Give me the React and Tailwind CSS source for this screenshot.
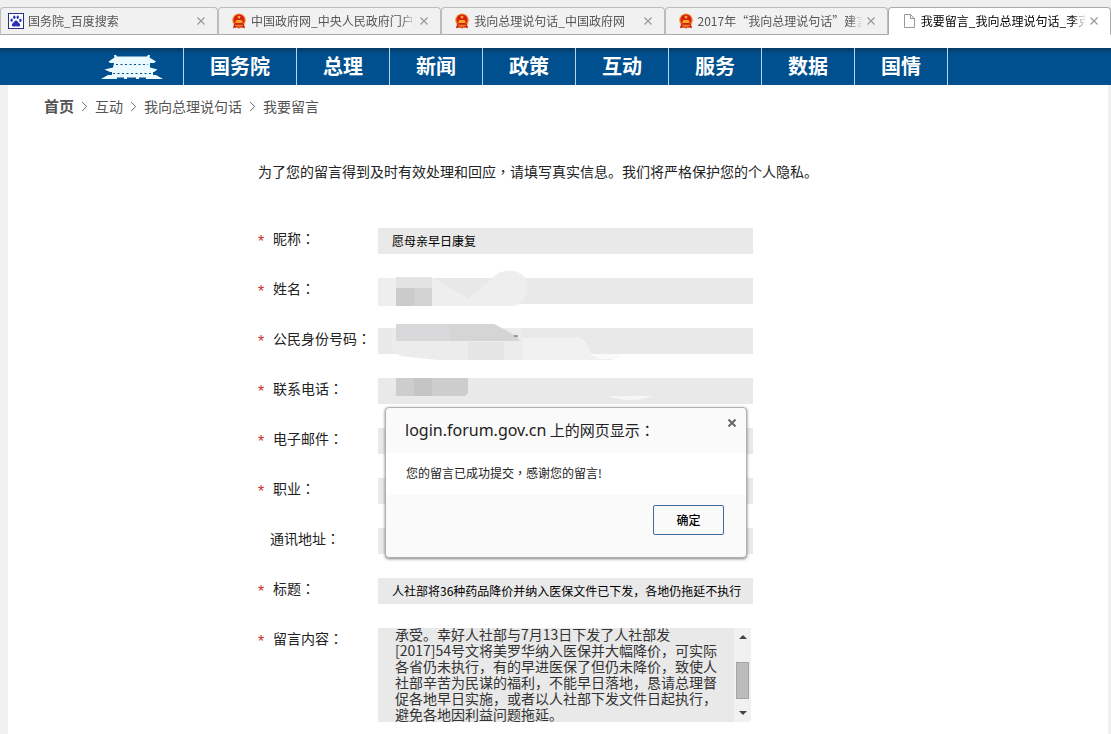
import { ChevronRight } from "lucide-react";

const tabs = [
  { icon: "paw", title: "国务院_百度搜索" },
  { icon: "emblem", title: "中国政府网_中央人民政府门户网" },
  { icon: "emblem", title: "我向总理说句话_中国政府网" },
  { icon: "emblem", title: "2017年“我向总理说句话”建言" },
  { icon: "page", title: "我要留言_我向总理说句话_李克强", active: true },
];

const navItems = ["国务院", "总理", "新闻", "政策", "互动", "服务", "数据", "国情"];

const fields = [
  { id: "nickname", label: "昵称", required: true, value: "愿母亲早日康复" },
  { id: "name", label: "姓名", required: true, value: "" },
  { id: "idcard", label: "公民身份号码", required: true, value: "" },
  { id: "phone", label: "联系电话", required: true, value: "" },
  { id: "email", label: "电子邮件", required: true, value: "" },
  { id: "job", label: "职业", required: true, value: "" },
  { id: "address", label: "通讯地址", required: false, value: "" },
  { id: "title", label: "标题", required: true, value: "人社部将36种药品降价并纳入医保文件已下发，各地仍拖延不执行" },
];

const message = [
  "承受。幸好人社部与7月13日下发了人社部发",
  "[2017]54号文将美罗华纳入医保并大幅降价，可实际",
  "各省仍未执行，有的早进医保了但仍未降价，致使人",
  "社部辛苦为民谋的福利，不能早日落地，恳请总理督",
  "促各地早日实施，或者以人社部下发文件日起执行，",
  "避免各地因利益问题拖延。",
].join("\n");

// full-width marks that sit in the middle of their box
function Mark({ children }) {
  return (
    <span lang="zh-TW" className="font-['Noto_Sans_CJK_TC',sans-serif]">
      {children}
    </span>
  );
}

function TabIcon({ name }) {
  if (name === "paw") {
    return (
      <svg viewBox="0 0 16 16" className="h-4 w-4 shrink-0">
        <rect x="0.5" y="0.5" width="15" height="15" fill="#fff" stroke="#2b3190" />
        <g fill="#2932b8">
          <ellipse cx="3.6" cy="7.2" rx="1.2" ry="1.6" transform="rotate(-12 3.6 7.2)" />
          <ellipse cx="6.3" cy="4.2" rx="1.2" ry="1.7" />
          <ellipse cx="9.7" cy="4.2" rx="1.2" ry="1.7" transform="rotate(8 9.7 4.2)" />
          <ellipse cx="12.4" cy="7.4" rx="1.2" ry="1.6" transform="rotate(14 12.4 7.4)" />
          <path d="M8 7.500c1.500 0 1.900 1.500 3 2.500 1.500 1.200 1.500 3.500-.5 3.600-1 .1-1.500-.3-2.500-.3s-1.500.4-2.500.3c-2-.1-2.100-2.300-.6-3.600C6.100 9 6.500 7.500 8 7.500z" />
        </g>
      </svg>
    );
  }
  if (name === "emblem") {
    return (
      <svg viewBox="0 0 16 16" className="h-4 w-4 shrink-0">
        <circle cx="8" cy="7.200" r="6.700" fill="#f0872a" />
        <path d="M3 11h10l1 4.200-3.500-.7L8 15.600l-2.500-1.100-3.500.7z" fill="#cf2413" />
        <circle cx="8" cy="7" r="5.500" fill="#d3200f" />
        <path d="M8 2.200l.6 1.300h1.300l-1 .9.4 1.300L8 5l-1.300.7.4-1.300-1-.9h1.300z" fill="#ffc534" />
        <path d="M4.500 8.500l1-1.600h5l1 1.600v1.400h-7z" fill="#f7a52b" />
        <path d="M4 12.300h8M5.500 14h5" stroke="#f5b63a" strokeWidth="0.800" />
      </svg>
    );
  }
  return (
    <svg viewBox="0 0 16 16" className="h-4 w-4 shrink-0">
      <path d="M3.500 1.500h6l4 4v9h-10zM9.500 1.500v4h4" fill="#fff" stroke="#999" />
    </svg>
  );
}

function Tab({ icon, title, active }) {
  return (
    <div
      className={
        active
          ? "flex min-w-0 flex-1 items-center rounded-t border border-b-white border-[#aaa] bg-white pr-2 pl-3 text-black"
          : "flex min-w-0 flex-1 items-center rounded-t border border-[#bcbcbc] border-b-[#aaa] bg-[#f1f1f1] pr-2 pl-3 text-[#555] first:w-[218px] first:flex-none first:pl-[7px]"
      }
    >
      <TabIcon name={icon} />
      <span className="ml-1 min-w-0 flex-1 overflow-hidden mask-[linear-gradient(to_right,#000_calc(100%-14px),transparent)] text-xs whitespace-nowrap">
        {title}
      </span>
      <button type="button" aria-label="关闭标签页" className="flex h-4 w-4 shrink-0 items-center justify-center text-[#999]">
        <svg viewBox="0 0 8 8" className="h-2 w-2" stroke="currentColor" strokeWidth="1.200">
          <path d="M0.500 0.500l7 7M7.500 0.500l-7 7" />
        </svg>
      </button>
    </div>
  );
}

function GateLogo() {
  return (
    <svg viewBox="0 0 62 26" className="h-[26px] w-[62px]" fill="#eafaff">
      <path d="M13 1h2l1 1.500h30L47 1h2l-.5 2.500L55 7.500l-2 1.500H9L7.500 7.500 13.500 3.500z" />
      <path d="M13 9h36v4.500l7.500 2L53 18H9l-5.500-2.500 8.500-2z" />
      <path d="M11 17h41v4h3l7 4H0l7-4h4z" />
      <path d="M15 10.500h32M12 19.500h38" stroke="#00508f" strokeWidth="1" strokeDasharray="2 2.500" fill="none" />
      <path d="M16 24.200h7M26 24.200h9M38 24.200h7" stroke="#00508f" strokeWidth="1.500" />
    </svg>
  );
}

function Smudges() {
  return (
    <svg
      viewBox="0 0 375 140"
      aria-hidden="true"
      className="pointer-events-none absolute top-[36px] left-[120px] h-[140px] w-[375px]"
    >
      {/* 姓名 */}
      <path d="M0 14h18v28H0z" fill="#ebebeb" />
      <path d="M36 14h24l30 20 22-17c6-9 16-12 24-10 14 3 17 17 10 27-2 5-6 8-12 8H0V14z" fill="#eee" />
      <path d="M55 14h58L90 34z" fill="#e8e8e8" />
      <path d="M18 13h36v11H18z" fill="#e3e3e3" />
      <path d="M18 24h18v18H18z" fill="#cbcbcb" />
      <path d="M36 24h18v18H36z" fill="#d2d2d2" />
      {/* 公民身份号码 */}
      <path d="M15 64h129v32H60L22 92 12 82z" fill="#ececec" />
      <path d="M90 78h36v18H90z" fill="#e5e5e5" />
      <path d="M144 74h50c10-3 18 6 18 15l25 7h-93z" fill="#f1f1f1" />
      <path d="M212 90h30v5h-20z" fill="#fafafa" />
      <path d="M18 60h98l22 12 4 5H18z" fill="#d8d7da" />
      <path d="M72 60h44l22 12 4 5H72z" fill="#d6d5d6" />
      <path d="M136 72h4" stroke="#555" />
      {/* 联系电话 */}
      <path d="M18 114h72v15l-3 3H18z" fill="#cdcdcd" />
      <path d="M36 114h18v18H36z" fill="#c5c5c5" />
      <path d="M230 132q22 8 45 0z" fill="#f6f6f6" />
    </svg>
  );
}

function AlertDialog() {
  return (
    <div
      role="alertdialog"
      aria-labelledby="alert-title"
      className="absolute top-[179px] left-[127px] w-[362px] rounded-sm border border-[#b0b0b0] bg-[#fafafa] text-black shadow-[0_1px_3px_rgba(0,0,0,0.5)]"
    >
      <div className="flex h-[45px] justify-between pr-[10px] pl-[19px]">
        <h2 id="alert-title" className="pt-[11px] text-[15px] leading-[22px] text-[#222]">
          <span className="font-['Noto_Sans',sans-serif] text-base leading-[22px]">login.forum.gov.cn</span> 上的网页显示<Mark>：</Mark>
        </h2>
        <button type="button" aria-label="关闭" className="mt-[11px] h-2 w-2">
          <svg viewBox="0 0 8 8" className="h-2 w-2" stroke="#666" strokeWidth="2">
            <path d="M0.500 0.500l7 7M7.500 0.500l-7 7" />
          </svg>
        </button>
      </div>
      <p className="h-[42px] bg-white pt-[11px] pl-5 text-xs leading-[18px] text-[#222]">
        您的留言已成功提交<Mark>，</Mark>感谢您的留言!
      </p>
      <div className="flex justify-end pt-[10px] pr-[22px] pb-[22px]">
        <button
          type="button"
          className="h-[30px] w-[71px] rounded-xs border border-[#3f6c9f] bg-[#fafafa] text-xs font-medium"
        >
          确定
        </button>
      </div>
    </div>
  );
}

function Label({ id, required, children }) {
  return (
    <label htmlFor={id} className="flex w-[120px] shrink-0 text-sm leading-5 text-[#222]">
      {required ? (
        <span className="w-[15px] pt-1 font-['Liberation_Sans',sans-serif] text-base leading-5 text-[#c8322d]">*</span>
      ) : (
        <span className="w-3" />
      )}
      <span>
        {children}
        <Mark>：</Mark>
      </span>
    </label>
  );
}

export default function App() {
  return (
    <div
      lang="zh-CN"
      className="flex min-h-screen flex-col bg-white font-['Noto_Sans_CJK_SC',sans-serif] text-[#222]"
    >
      <div className="flex h-[35px] bg-[#efefef] pt-[7px]">
        {tabs.map((tab) => (
          <Tab key={tab.title} {...tab} />
        ))}
      </div>

      <header className="mt-[13px] flex h-[37px] bg-[linear-gradient(#083a63,#00508f_6px,#00508f)]">
        <a href="#" aria-label="中国政府网" className="flex w-[184px] items-center justify-end border-r border-[#b9d3e6] pr-5">
          <GateLogo />
        </a>
        <nav className="flex">
          {navItems.map((item) => (
            <a
              key={item}
              href="#"
              className="flex w-[93px] items-center justify-center border-r border-[#b9d3e6] pb-0.5 text-xl font-bold text-white first:w-[113px]"
            >
              {item}
            </a>
          ))}
        </nav>
      </header>

      <div className="flex-1 border-r-[3px] border-l-8 border-[#f0f0f0] pb-3">
        <nav aria-label="面包屑" className="flex items-center gap-0.5 pt-[9px] pl-9 text-sm leading-6 text-[#555]">
          <a href="#" className="text-[15px] leading-6 font-bold">首页</a>
          <ChevronRight size={17} strokeWidth={1.25} />
          <a href="#">互动</a>
          <ChevronRight size={17} strokeWidth={1.25} />
          <a href="#">我向总理说句话</a>
          <ChevronRight size={17} strokeWidth={1.25} />
          <a href="#">我要留言</a>
        </nav>

        <main className="pt-[41px] pl-[250px]">
          <p className="text-sm leading-6">
            为了您的留言得到及时有效处理和回应<Mark>，</Mark>请填写真实信息。我们将严格保护您的个人隐私。
          </p>

          <form className="relative mt-[45px] flex flex-col gap-6">
            {fields.map((field) => (
              <div key={field.id} className="flex h-[26px]">
                <Label id={field.id} required={field.required}>
                  {field.label}
                </Label>
                <input
                  id={field.id}
                  type="text"
                  defaultValue={field.value}
                  className="w-[375px] bg-[#e9e9e9] pl-[14px] text-xs text-black outline-none"
                />
              </div>
            ))}

            <div className="flex">
              <Label id="content" required>
                留言内容
              </Label>
              <div className="flex h-[94px] w-[373px] overflow-hidden bg-[#e9e9e9]">
                <textarea
                  id="content"
                  defaultValue={message}
                  className="-mt-0.5 h-24 min-w-0 flex-1 resize-none overflow-hidden pl-[17px] text-sm leading-4 whitespace-pre text-[#333] outline-none"
                />
                <div aria-hidden="true" className="flex w-[17px] flex-col items-center bg-[#f1f1f1] py-[7px]">
                  <svg viewBox="0 0 8 4" className="h-1 w-2" fill="#444">
                    <path d="M0 4l4-4 4 4z" />
                  </svg>
                  <div className="mt-[23px] h-[37px] w-[13px] border border-[#a5a5a5] bg-[#bcbcbc]" />
                  <svg viewBox="0 0 8 4" className="mt-auto h-1 w-2" fill="#444">
                    <path d="M0 0l4 4 4-4z" />
                  </svg>
                </div>
              </div>
            </div>

            <Smudges />
            <AlertDialog />
          </form>
        </main>
      </div>
    </div>
  );
}
